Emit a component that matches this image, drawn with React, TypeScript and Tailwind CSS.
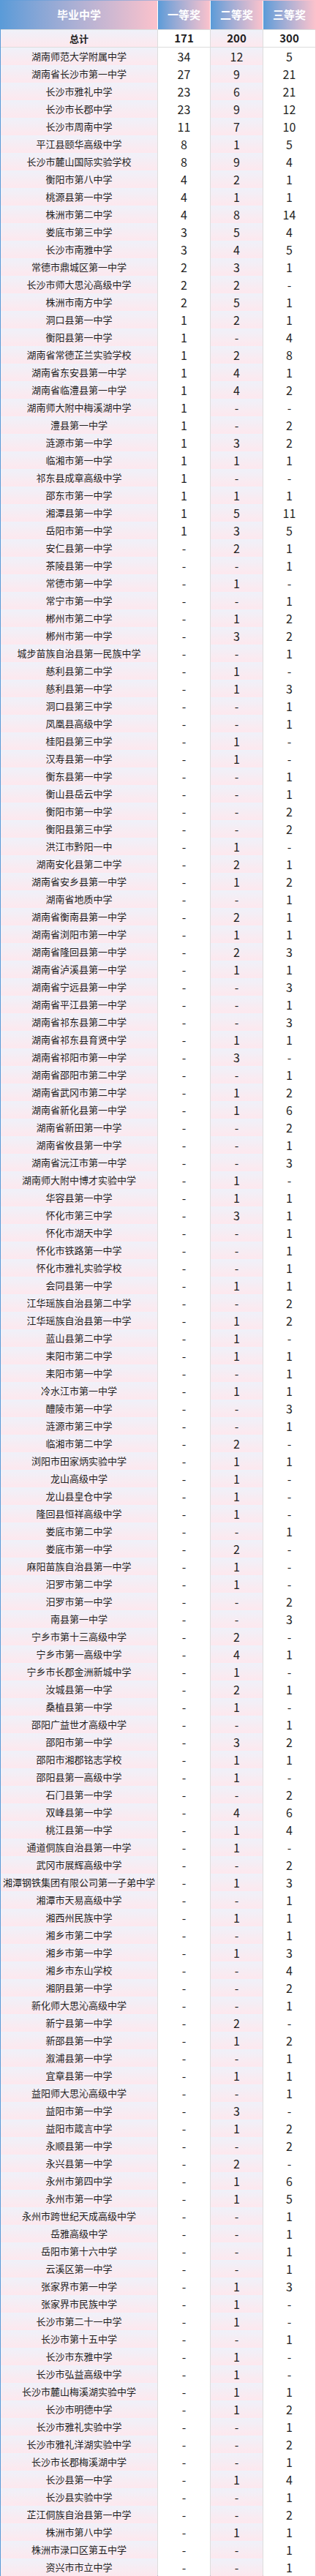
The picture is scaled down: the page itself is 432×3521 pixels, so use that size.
import React from 'react';

// 学校获奖统计：名称|一等奖|二等奖|三等奖
const rows: string[] = [
  '湖南师范大学附属中学|34|12|5',
  '湖南省长沙市第一中学|27|9|21',
  '长沙市雅礼中学|23|6|21',
  '长沙市长郡中学|23|9|12',
  '长沙市周南中学|11|7|10',
  '平江县颐华高级中学|8|1|5',
  '长沙市麓山国际实验学校|8|9|4',
  '衡阳市第八中学|4|2|1',
  '桃源县第一中学|4|1|1',
  '株洲市第二中学|4|8|14',
  '娄底市第三中学|3|5|4',
  '长沙市南雅中学|3|4|5',
  '常德市鼎城区第一中学|2|3|1',
  '长沙市师大思沁高级中学|2|2|-',
  '株洲市南方中学|2|5|1',
  '洞口县第一中学|1|2|1',
  '衡阳县第一中学|1|-|4',
  '湖南省常德芷兰实验学校|1|2|8',
  '湖南省东安县第一中学|1|4|1',
  '湖南省临澧县第一中学|1|4|2',
  '湖南师大附中梅溪湖中学|1|-|-',
  '澧县第一中学|1|-|2',
  '涟源市第一中学|1|3|2',
  '临湘市第一中学|1|1|1',
  '祁东县成章高级中学|1|-|-',
  '邵东市第一中学|1|1|1',
  '湘潭县第一中学|1|5|11',
  '岳阳市第一中学|1|3|5',
  '安仁县第一中学|-|2|1',
  '茶陵县第一中学|-|-|1',
  '常德市第一中学|-|1|-',
  '常宁市第一中学|-|-|1',
  '郴州市第二中学|-|1|2',
  '郴州市第一中学|-|3|2',
  '城步苗族自治县第一民族中学|-|-|1',
  '慈利县第二中学|-|1|-',
  '慈利县第一中学|-|1|3',
  '洞口县第三中学|-|-|1',
  '凤凰县高级中学|-|-|1',
  '桂阳县第三中学|-|1|-',
  '汉寿县第一中学|-|1|-',
  '衡东县第一中学|-|-|1',
  '衡山县岳云中学|-|-|1',
  '衡阳市第一中学|-|-|2',
  '衡阳县第三中学|-|-|2',
  '洪江市黔阳一中|-|1|-',
  '湖南安化县第二中学|-|2|1',
  '湖南省安乡县第一中学|-|1|2',
  '湖南省地质中学|-|-|1',
  '湖南省衡南县第一中学|-|2|1',
  '湖南省浏阳市第一中学|-|1|1',
  '湖南省隆回县第一中学|-|2|3',
  '湖南省泸溪县第一中学|-|1|1',
  '湖南省宁远县第一中学|-|-|3',
  '湖南省平江县第一中学|-|-|1',
  '湖南省祁东县第二中学|-|-|3',
  '湖南省祁东县育贤中学|-|1|1',
  '湖南省祁阳市第一中学|-|3|-',
  '湖南省邵阳市第二中学|-|-|1',
  '湖南省武冈市第二中学|-|1|2',
  '湖南省新化县第一中学|-|1|6',
  '湖南省新田第一中学|-|-|2',
  '湖南省攸县第一中学|-|-|1',
  '湖南省沅江市第一中学|-|-|3',
  '湖南师大附中博才实验中学|-|1|-',
  '华容县第一中学|-|1|1',
  '怀化市第三中学|-|3|1',
  '怀化市湖天中学|-|-|1',
  '怀化市铁路第一中学|-|-|1',
  '怀化市雅礼实验学校|-|-|1',
  '会同县第一中学|-|1|1',
  '江华瑶族自治县第二中学|-|-|2',
  '江华瑶族自治县第一中学|-|1|2',
  '蓝山县第二中学|-|1|-',
  '耒阳市第二中学|-|1|1',
  '耒阳市第一中学|-|-|1',
  '冷水江市第一中学|-|1|1',
  '醴陵市第一中学|-|-|3',
  '涟源市第三中学|-|-|1',
  '临湘市第二中学|-|2|-',
  '浏阳市田家炳实验中学|-|1|1',
  '龙山高级中学|-|1|-',
  '龙山县皇仓中学|-|1|-',
  '隆回县恒祥高级中学|-|1|-',
  '娄底市第二中学|-|-|1',
  '娄底市第一中学|-|2|-',
  '麻阳苗族自治县第一中学|-|1|-',
  '汨罗市第二中学|-|1|-',
  '汨罗市第一中学|-|-|2',
  '南县第一中学|-|-|3',
  '宁乡市第十三高级中学|-|2|-',
  '宁乡市第一高级中学|-|4|1',
  '宁乡市长郡金洲新城中学|-|1|-',
  '汝城县第一中学|-|2|1',
  '桑植县第一中学|-|1|-',
  '邵阳广益世才高级中学|-|-|1',
  '邵阳市第一中学|-|3|2',
  '邵阳市湘郡铭志学校|-|1|1',
  '邵阳县第一高级中学|-|1|-',
  '石门县第一中学|-|-|2',
  '双峰县第一中学|-|4|6',
  '桃江县第一中学|-|1|4',
  '通道侗族自治县第一中学|-|1|-',
  '武冈市展辉高级中学|-|-|2',
  '湘潭钢铁集团有限公司第一子弟中学|-|1|3',
  '湘潭市天易高级中学|-|-|1',
  '湘西州民族中学|-|1|1',
  '湘乡市第二中学|-|-|1',
  '湘乡市第一中学|-|1|3',
  '湘乡市东山学校|-|-|4',
  '湘阴县第一中学|-|-|2',
  '新化师大思沁高级中学|-|-|1',
  '新宁县第一中学|-|2|-',
  '新邵县第一中学|-|1|2',
  '溆浦县第一中学|-|-|1',
  '宜章县第一中学|-|1|1',
  '益阳师大思沁高级中学|-|-|1',
  '益阳市第一中学|-|3|-',
  '益阳市箴言中学|-|1|2',
  '永顺县第一中学|-|-|2',
  '永兴县第一中学|-|2|-',
  '永州市第四中学|-|1|6',
  '永州市第一中学|-|1|5',
  '永州市跨世纪天成高级中学|-|-|1',
  '岳雅高级中学|-|-|1',
  '岳阳市第十六中学|-|-|1',
  '云溪区第一中学|-|-|1',
  '张家界市第一中学|-|1|3',
  '张家界市民族中学|-|1|-',
  '长沙市第二十一中学|-|1|-',
  '长沙市第十五中学|-|-|1',
  '长沙市东雅中学|-|1|-',
  '长沙市弘益高级中学|-|1|-',
  '长沙市麓山梅溪湖实验中学|-|1|1',
  '长沙市明德中学|-|1|2',
  '长沙市雅礼实验中学|-|-|1',
  '长沙市雅礼洋湖实验中学|-|-|2',
  '长沙市长郡梅溪湖中学|-|-|1',
  '长沙县第一中学|-|1|4',
  '长沙县实验中学|-|-|1',
  '芷江侗族自治县第一中学|-|-|2',
  '株洲市第八中学|-|1|1',
  '株洲市渌口区第五中学|-|-|1',
  '资兴市市立中学|-|-|1',
];

const tint = 'bg-gradient-to-b from-[#eff1f9] to-[#fde8ee]';
const head = 'bg-gradient-to-r from-[#5a9bd8] to-[#fbc2cc] flex items-center justify-center text-white font-bold text-[15px]';

const Row: React.FC<{ cells: string[]; total?: boolean }> = ({ cells, total }) => {
  const num = total ? 'text-[15px] font-bold' : 'text-[16px]';
  return (
    <div className="grid grid-cols-[214px_71px_71px_71px] gap-x-px h-[23px]">
      <div className={`${tint} flex items-center justify-center text-[13px] ${total ? 'font-bold' : ''} whitespace-nowrap`}>
        {cells[0]}
      </div>
      <div className={`bg-white flex items-center justify-center ${num}`}>{cells[1]}</div>
      <div className={`${tint} flex items-center justify-center ${num}`}>{cells[2]}</div>
      <div className={`bg-white flex items-center justify-center ${num}`}>{cells[3]}</div>
    </div>
  );
};

export default function App() {
  return (
    <div className="w-[432px] bg-white font-['Noto_Sans_CJK_SC','Noto_Sans',sans-serif] text-[#1f1f1f]">
      <div className="p-px bg-gradient-to-r from-[#5a9bd8] to-[#fbc2cc]">
        <div className="flex flex-col gap-y-px bg-[#dddddd]">
          {/* 表头 */}
          <div className="grid grid-cols-[214px_71px_71px_71px] gap-x-px h-[39px] bg-white">
            <div className={head}>毕业中学</div>
            <div className={head}>一等奖</div>
            <div className={head}>二等奖</div>
            <div className={head}>三等奖</div>
          </div>
          <Row cells={['总计', '171', '200', '300']} total />
          {rows.map((r) => (
            <Row key={r} cells={r.split('|')} />
          ))}
        </div>
      </div>
    </div>
  );
}
